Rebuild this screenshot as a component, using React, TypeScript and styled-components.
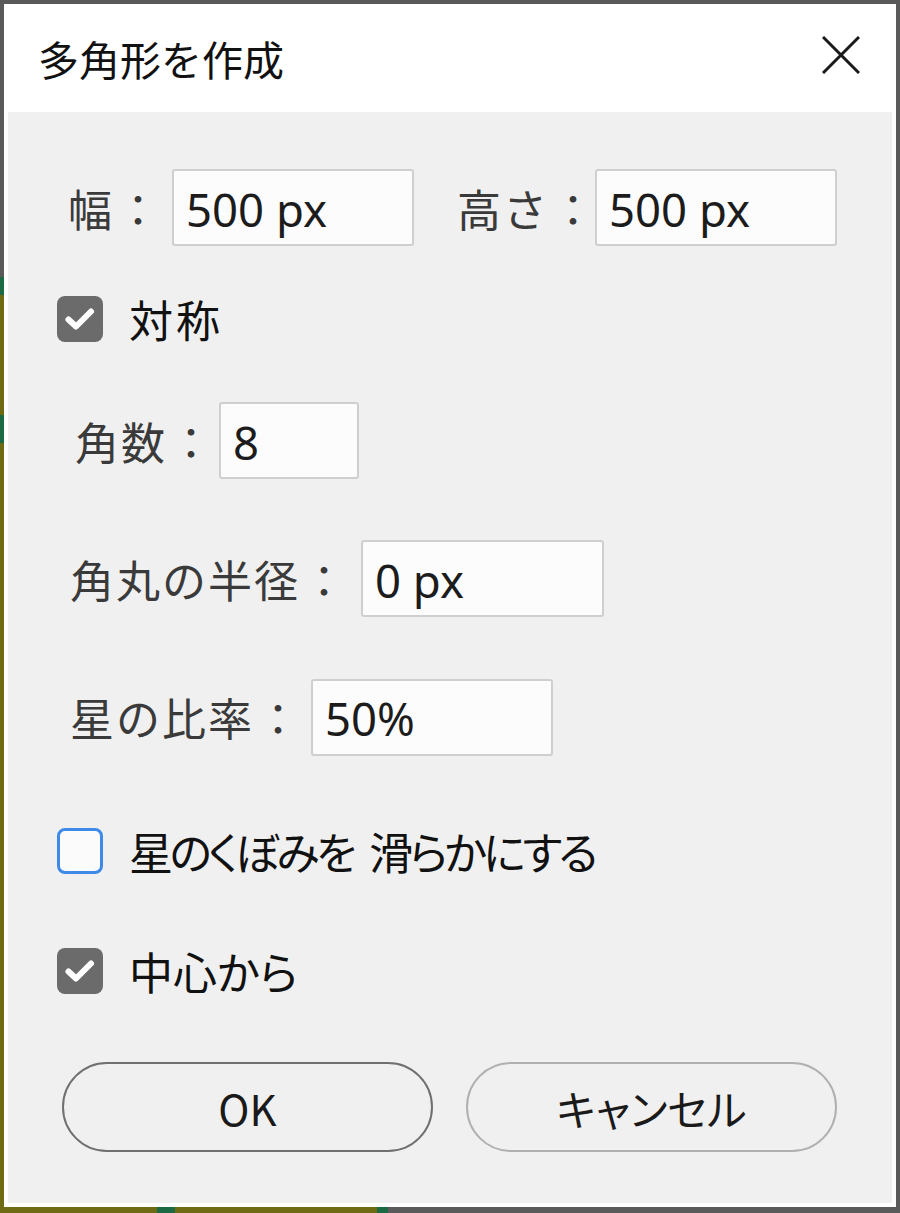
import React from "react";
import styled, { createGlobalStyle } from "styled-components";

const GlobalStyle = createGlobalStyle`
  html, body { margin: 0; padding: 0; background: #ffffff; }
  body { font-family: "Noto Sans", "Noto Sans CJK JP", sans-serif; }
  * { box-sizing: border-box; }
`;

const FONT = `"Noto Sans", "Noto Sans CJK JP", sans-serif`;
const JFONT = `"Noto Sans CJK JP", "Noto Sans", sans-serif`;

const Frame = styled.div`
  width: 900px;
  height: 1213px;
  padding: 4px 4px 6px 4px;
  background:
    linear-gradient(to bottom, #5a5a5a 0 277px, #1c6a44 277px 295px, #6e6b14 295px 415px, #1c6a44 415px 443px, #6e6b14 443px) 0 0 / 4px 100% no-repeat,
    linear-gradient(to right, #6e6b14 0 157px, #1c6a44 157px 175px, #6e6b14 175px 377px, #1c6a44 377px 388px, #5a5a5a 388px) 0 100% / 100% 6px no-repeat,
    #5a5a5a;
`;

const Window = styled.div`
  height: 100%;
  background: #ffffff;
  display: flex;
  flex-direction: column;
  padding: 0 4px 4px 4px;
`;

const TitleBar = styled.div`
  height: 108px;
  flex: none;
  display: flex;
  align-items: center;
  justify-content: space-between;
  margin: 0 -4px;
  padding: 0 36px 0 34px;
`;

const Title = styled.div`
  font-family: ${JFONT};
  font-size: 41px;
  color: #111111;
  line-height: 1;
`;

const CloseButton = styled.div`
  width: 38px;
  height: 38px;
  display: flex;
  align-items: center;
  justify-content: center;
  margin-top: -6px;
`;

const Body = styled.div`
  flex: 1;
  background: #f0f0f0;
  display: flex;
  flex-direction: column;
`;

const Row = styled.div<{ $top: number; $indent: number; $height: number }>`
  display: flex;
  align-items: center;
  margin-top: ${(p) => p.$top}px;
  padding-left: ${(p) => p.$indent}px;
  height: ${(p) => p.$height}px;
`;

const Group = styled.div<{ $gap?: number }>`
  display: flex;
  align-items: center;
  margin-left: ${(p) => p.$gap ?? 0}px;
`;

const Label = styled.span`
  font-family: ${JFONT};
  font-size: 44px;
  letter-spacing: 2px;
  color: #3a3a3a;
  line-height: 1;
`;

const Colon = styled.span<{ $after: number }>`
  font-family: ${JFONT};
  font-size: 44px;
  color: #3a3a3a;
  width: 44px;
  text-align: center;
  margin: 0 ${(p) => p.$after}px 0 2px;
  line-height: 1;
`;

const Field = styled.input<{ $w: number }>`
  width: ${(p) => p.$w}px;
  height: 77px;
  border: 2px solid #cfcfcf;
  border-radius: 3px;
  background: #fcfcfc;
  font-family: ${FONT};
  font-size: 45.5px;
  color: #1c1c1c;
  padding: 2px 12px 0 12px;
  outline: none;
`;

const Box = styled.div<{ $checked: boolean }>`
  width: 46px;
  height: 46px;
  border-radius: 8px;
  flex: none;
  display: flex;
  align-items: center;
  justify-content: center;
  background: ${(p) => (p.$checked ? "#6b6b6b" : "#fbfbfb")};
  border: ${(p) => (p.$checked ? "none" : "3px solid #3f8ae6")};
`;

const CheckText = styled.span<{ $spacing: number }>`
  font-family: ${JFONT};
  font-size: 44px;
  color: #111111;
  line-height: 1;
  margin-left: 26px;
  letter-spacing: ${(p) => p.$spacing}px;
  word-spacing: 10px;
  font-feature-settings: "palt";
  white-space: pre;
`;

const ButtonRow = styled.div`
  display: flex;
  gap: 33px;
  margin-top: 68px;
  padding-left: 54px;
`;

const Button = styled.button<{ $primary?: boolean }>`
  width: 371px;
  height: 90px;
  border-radius: 45px;
  background: #f0f0f0;
  border: ${(p) => (p.$primary ? "2.5px solid #707070" : "2px solid #b0b0b0")};
  font-family: ${JFONT};
  font-size: 42px;
  color: #1a1a1a;
  display: flex;
  align-items: center;
  justify-content: center;
  padding: 0;
  font-feature-settings: "palt";
`;

const Check = () => (
  <svg width="36" height="36" viewBox="0 0 36 36">
    <polyline
      points="6.5,18.5 14,25.5 29,10.5"
      fill="none"
      stroke="#ffffff"
      strokeWidth="6"
      strokeLinecap="round"
      strokeLinejoin="round"
    />
  </svg>
);

const Checkbox: React.FC<{ checked: boolean; label: string; top: number; spacing?: number }> = ({
  checked,
  label,
  top,
  spacing = 0,
}) => (
  <Row $top={top} $indent={49} $height={46}>
    <Box $checked={checked}>{checked && <Check />}</Box>
    <CheckText $spacing={spacing}>{label}</CheckText>
  </Row>
);

const LabeledField: React.FC<{
  label: string;
  value: string;
  w: number;
  gap?: number;
  after: number;
}> = ({ label, value, w, gap, after }) => (
  <Group $gap={gap}>
    <Label>{label}</Label>
    <Colon $after={after}>：</Colon>
    <Field $w={w} readOnly defaultValue={value} />
  </Group>
);

export default function App() {
  return (
    <>
      <GlobalStyle />
      <Frame>
        <Window>
          <TitleBar>
            <Title>多角形を作成</Title>
            <CloseButton>
              <svg width="38" height="38" viewBox="0 0 38 38">
                <path d="M1 1 L37 37 M37 1 L1 37" stroke="#1a1a1a" strokeWidth="3" fill="none" />
              </svg>
            </CloseButton>
          </TitleBar>
          <Body>
            <Row $top={57} $indent={60} $height={77}>
              <LabeledField label="幅" value="500 px" w={242} after={12} />
              <LabeledField label="高さ" value="500 px" w={242} gap={43} after={0} />
            </Row>
            <Checkbox checked={true} label="対称" top={50} spacing={3} />
            <Row $top={60} $indent={67} $height={77}>
              <LabeledField label="角数" value="8" w={140} after={6} />
            </Row>
            <Row $top={61} $indent={62} $height={77}>
              <LabeledField label="角丸の半径" value="0 px" w={243} after={15} />
            </Row>
            <Row $top={61} $indent={62} $height={78}>
              <LabeledField label="星の比率" value="50%" w={242} after={11} />
            </Row>
            <Checkbox checked={false} label="星のくぼみを 滑らかにする" top={72} spacing={-3.6} />
            <Checkbox checked={true} label="中心から" top={74} />
            <ButtonRow>
              <Button $primary>OK</Button>
              <Button>キャンセル</Button>
            </ButtonRow>
          </Body>
        </Window>
      </Frame>
    </>
  );
}
